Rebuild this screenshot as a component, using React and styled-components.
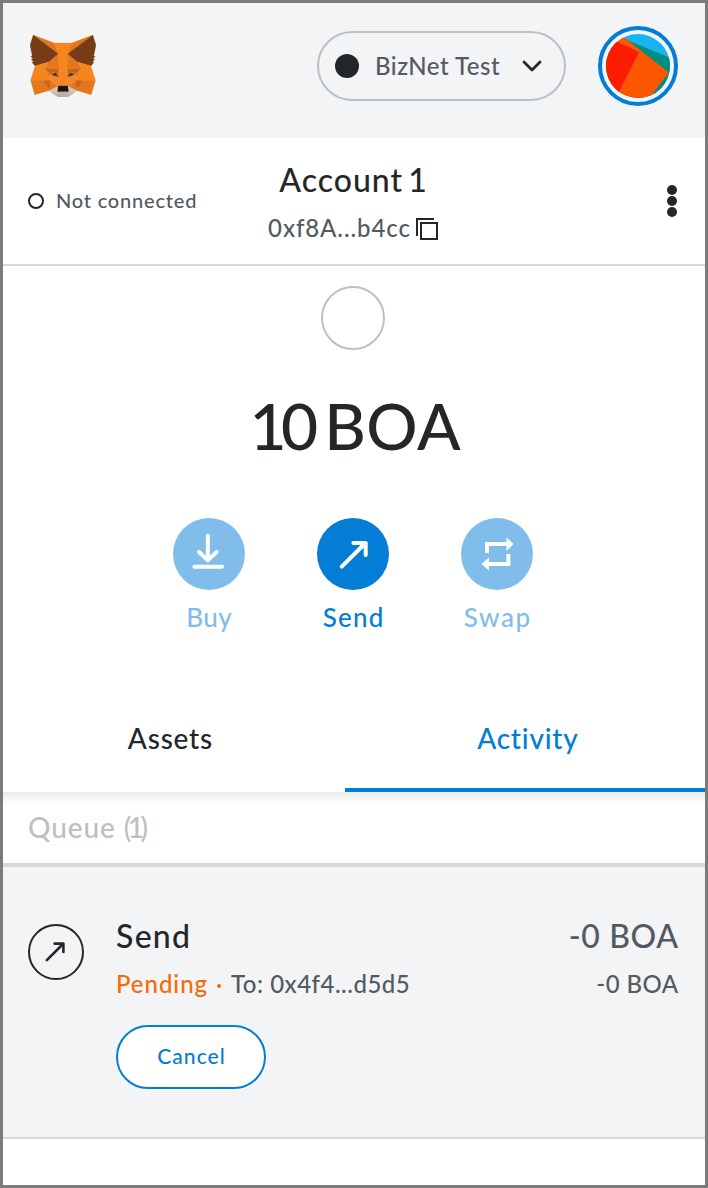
import React from "react";
import styled, { createGlobalStyle } from "styled-components";

const c = {
  frame: "#7c7b7b",
  ink: "#24272a",
  muted: "#535a61",
  faint: "#bbc0c5",
  line: "#d6d9dc",
  surface: "#f2f4f6",
  blue: "#037dd6",
  orange: "#f66a0a",
};

const GlobalStyle = createGlobalStyle`
  * { box-sizing: border-box; }
  body { margin: 0; background: #fff; }
  button { font: inherit; letter-spacing: inherit; border: 0; padding: 0; background: none; color: inherit; }
`;

const Popup = styled.main`
  display: flex;
  flex-direction: column;
  width: 708px;
  height: 1188px;
  border: 3px solid ${c.frame};
  background: #fff;
  color: ${c.ink};
  font-family: Lato, "Liberation Sans", sans-serif;
  overflow: hidden;
`;

const Label = styled.span`
  display: block;
  white-space: nowrap;
  font-size: ${(p) => p.$size}px;
  line-height: ${(p) => p.$line}px;
  letter-spacing: ${(p) => p.$track || 0}px;
  word-spacing: ${(p) => p.$word || 0}px;
  margin-right: ${(p) => -(p.$track || 0)}px;
  font-weight: 500;
  color: ${(p) => p.$color || "inherit"};
`;

const Digits = styled.span`
  letter-spacing: ${(p) => p.$track}px;
`;

const Header = styled.header`
  display: flex;
  align-items: center;
  height: 135px;
  padding: 0 27px 9px;
  background: ${c.surface};
`;

const FoxLogo = styled.svg`
  display: block;
  width: 66px;
  height: 62px;
`;

const NetworkPicker = styled.button`
  display: flex;
  align-items: center;
  width: 249px;
  height: 70px;
  margin-left: auto;
  padding: 0 22px 0 16px;
  border: 2px solid ${c.faint};
  border-radius: 35px;
`;

const NetworkDot = styled.span`
  width: 24px;
  height: 24px;
  margin-right: 16px;
  border-radius: 50%;
  background: ${c.ink};
`;

const NetworkName = styled.div`
  padding-bottom: 1px;
`;

const Chevron = styled.svg`
  display: block;
  width: 20px;
  height: 12px;
  margin-left: auto;
`;

const Avatar = styled.div`
  width: 80px;
  height: 80px;
  margin-left: 32px;
  padding: 4px;
  border: 4px solid ${c.blue};
  border-radius: 50%;
`;

const Identicon = styled.svg`
  display: block;
  width: 64px;
  height: 64px;
  border-radius: 50%;
`;

const AccountBar = styled.section`
  display: grid;
  grid-template-columns: 1fr auto 1fr;
  align-items: center;
  height: 128px;
  padding: 0 25px;
  border-bottom: 2px solid ${c.line};
`;

const Connection = styled.div`
  display: flex;
  align-items: center;
  gap: 12px;
`;

const ConnectionRing = styled.span`
  width: 16px;
  height: 16px;
  border: 2px solid ${c.ink};
  border-radius: 50%;
`;

const ConnectionText = styled.div`
  padding-bottom: 2px;
`;

const AccountInfo = styled.div`
  display: flex;
  flex-direction: column;
  align-items: center;
  gap: 12px;
  padding-top: 2px;
  padding-right: 2px;
`;

const AddressRow = styled.div`
  display: flex;
  align-items: center;
  gap: 6px;
`;

const CopyIcon = styled.svg`
  display: block;
  width: 22px;
  height: 22px;
  margin-top: 2px;
`;

const MenuDots = styled.div`
  display: flex;
  flex-direction: column;
  gap: 1px;
  justify-self: end;
  padding-right: 3px;
`;

const Dot = styled.span`
  width: 10px;
  height: 10px;
  border-radius: 50%;
  background: ${c.ink};
`;

const Overview = styled.section`
  display: flex;
  flex-direction: column;
  align-items: center;
  height: 422px;
  padding-top: 20px;
  padding-right: 2px;
`;

const TokenRing = styled.div`
  width: 64px;
  height: 64px;
  border: 2px solid ${c.faint};
  border-radius: 50%;
`;

const Balance = styled.div`
  display: flex;
  justify-content: center;
  margin: 35px 0 52px;
  padding-left: 4px;
`;

const Actions = styled.div`
  display: flex;
  gap: 72px;
`;

const Action = styled.button`
  display: flex;
  flex-direction: column;
  align-items: center;
  gap: 11px;
  width: 72px;
  color: ${c.blue};
  opacity: ${(p) => (p.disabled ? 0.5 : 1)};
`;

const ActionDisc = styled.span`
  display: block;
  width: 72px;
  height: 72px;
  border-radius: 50%;
  background: ${c.blue};

  svg { display: block; }
`;

const Tabs = styled.nav`
  display: flex;
  height: 104px;
`;

const Tab = styled.button`
  display: flex;
  justify-content: center;
  width: ${(p) => p.$width}px;
  padding: ${(p) => p.$pad};
  border-bottom: 4px solid ${(p) => (p.$active ? c.blue : "transparent")};
  color: ${(p) => (p.$active ? c.blue : c.ink)};
`;

const QueueTitle = styled.div`
  height: 75px;
  padding: 18px 25px 0;
  border-bottom: 4px solid ${c.line};
  background: linear-gradient(#ebebeb, #f8f8f8 7px, #fff 15px);
`;

const Transaction = styled.article`
  display: flex;
  height: 272px;
  padding: 49px 27px 0 25px;
  background: ${c.surface};
  border-bottom: 2px solid ${c.line};
`;

const TransactionIcon = styled.div`
  width: 56px;
  height: 56px;
  margin: 8px 32px 0 0;
  border: 2px solid ${c.ink};
  border-radius: 50%;

  svg { display: block; }
`;

const Details = styled.div`
  display: flex;
  flex: 1;
  flex-direction: column;
  align-items: flex-start;
`;

const StatusRow = styled.div`
  display: flex;
  align-items: center;
  margin-top: 13px;
`;

const StatusDot = styled.span`
  width: 4px;
  height: 4px;
  margin: 4px 10px 0;
  border-radius: 50%;
  background: ${c.orange};
`;

const CancelButton = styled.button`
  display: flex;
  align-items: center;
  justify-content: center;
  width: 150px;
  height: 64px;
  margin-top: 26px;
  padding-bottom: 2px;
  border: 2px solid ${c.blue};
  border-radius: 32px;
  background: #fff;
  color: ${c.blue};
`;

const Amounts = styled.div`
  display: flex;
  flex-direction: column;
  align-items: flex-end;
  gap: 13px;
  color: ${c.muted};
`;

const foxShapes = [
  ["#e2761b", "274.1,35.5 174.6,109.4 193,65.8"],
  ["#e4761b", "44.4,35.5 143.1,110.1 125.6,65.8"],
  ["#e4761b", "238.3,206.8 211.8,247.4 268.5,263 284.8,207.7"],
  ["#e4761b", "33.9,207.7 50.1,263 106.8,247.4 80.3,206.8"],
  ["#e4761b", "103.6,138.2 87.8,162.1 144.1,164.6 142.1,104.1"],
  ["#e4761b", "214.9,138.2 175.9,103.4 174.6,164.6 230.8,162.1"],
  ["#e4761b", "106.8,247.4 140.6,230.9 111.4,208.1"],
  ["#e4761b", "177.9,230.9 211.8,247.4 207.1,208.1"],
  ["#d7c1b3", "211.8,247.4 177.9,230.9 180.6,253 180.3,262.3"],
  ["#d7c1b3", "106.8,247.4 138.3,262.3 138.1,253 140.6,230.9"],
  ["#cd6116", "106.8,247.4 111.6,206.8 80.3,207.7"],
  ["#cd6116", "207,206.8 211.8,247.4 238.3,207.7"],
  ["#cd6116", "230.8,162.1 174.6,164.6 179.8,193.5 188.1,176.1 208.1,185.2"],
  ["#cd6116", "110.6,185.2 130.6,176.1 138.8,193.5 144.1,164.6 87.8,162.1"],
  ["#e4751f", "87.8,162.1 111.4,208.1 110.6,185.2"],
  ["#e4751f", "208.1,185.2 207.1,208.1 230.8,162.1"],
  ["#e4751f", "144.1,164.6 138.8,193.5 145.4,227.6 146.9,182.7"],
  ["#e4751f", "174.6,164.6 171.9,182.6 173.1,227.6 179.8,193.5"],
  ["#f6851b", "179.8,193.5 173.1,227.6 177.9,230.9 207.1,208.1 208.1,185.2"],
  ["#f6851b", "110.6,185.2 111.4,208.1 140.6,230.9 145.4,227.6 138.8,193.5"],
  ["#cd6116", "110.6,185.2 130.6,176.1 138.8,193.5"],
  ["#cd6116", "179.7,193.5 188,176.1 208.1,185.2"],
  ["#233447", "138.8,193.5 117,187 131,180"],
  ["#233447", "179.7,193.5 187.5,180 201.5,187"],
  ["#c0ad9e", "180.3,262.3 180.6,253 178.1,250.8 140.4,250.8 138.1,253 138.3,262.3 106.8,247.4 117.8,256.4 140.1,271.9 178.4,271.9 200.8,256.4 211.8,247.4"],
  ["#161616", "177.9,230.9 173.1,227.6 145.4,227.6 140.6,230.9 138.1,253 140.4,250.8 178.1,250.8 180.6,253"],
  ["#763d16", "278.3,114.2 286.8,73.4 274.1,35.5 177.9,106.9 214.9,138.2 267.2,153.5 278.8,140 273.8,136.4 281.8,129.1 275.6,124.3 283.6,118.2"],
  ["#763d16", "31.8,73.4 40.3,114.2 34.9,118.2 42.9,124.3 36.8,129.1 44.8,136.4 39.8,140 51.3,153.5 103.6,138.2 140.6,106.9 44.4,35.5"],
  ["#f6851b", "267.2,153.5 214.9,138.2 230.8,162.1 207.1,208.1 238.3,207.7 284.8,207.7"],
  ["#f6851b", "103.6,138.2 51.3,153.5 33.9,207.7 80.3,207.7 111.4,208.1 87.8,162.1"],
  ["#f6851b", "174.6,164.6 177.9,106.9 193.1,65.8 125.6,65.8 140.6,106.9 144.1,164.6 145.3,182.8 145.4,227.6 173.1,227.6 173.3,182.8"],
];

const BuyGlyph = () => (
  <svg width="72" height="72" fill="none" stroke="#fff" strokeWidth="4" strokeLinecap="round" strokeLinejoin="round">
    <path d="M34.8 17.8V41M26 34l8.8 8.4L43.6 34M21.4 48.8h27.6" />
  </svg>
);

const SendGlyph = () => (
  <svg width="72" height="72" fill="none" stroke="#fff" strokeWidth="4" strokeLinecap="round" strokeLinejoin="round">
    <path d="M24.7 48.7L48 25.5M36.4 25H48.7V37" />
  </svg>
);

const SwapGlyph = () => (
  <svg width="72" height="72" fill="#fff">
    <path d="M24 35V24h21.5v-4.6l7 6.6-7 7v-5H28v7zM49.4 36v12H28v4.6L20.4 46l7.6-6.6V44h17.4v-8z" />
  </svg>
);

export default function App() {
  return (
    <>
      <GlobalStyle />
      <Popup>
        <Header>
          <FoxLogo viewBox="31.8 35.5 255 236.4" preserveAspectRatio="none" aria-hidden="true">
            {foxShapes.map(([fill, points]) => (
              <polygon key={fill + points} points={points} fill={fill} stroke={fill} strokeWidth="0.8" />
            ))}
          </FoxLogo>
          <NetworkPicker>
            <NetworkDot />
            <NetworkName>
              <Label $size={24} $line={30} $track={0.5} $color={c.muted}>BizNet Test</Label>
            </NetworkName>
            <Chevron viewBox="0 0 20 12" fill="none" stroke={c.ink} strokeWidth="2.8" strokeLinecap="round" strokeLinejoin="round">
              <path d="M2 2l8 8 8-8" />
            </Chevron>
          </NetworkPicker>
          <Avatar>
            <Identicon viewBox="0 0 64 64" aria-hidden="true">
              <rect width="64" height="64" fill="#18b4f2" />
              <path d="M14 3L64 23.7V64H30z" fill="#018e7f" />
              <path d="M0 -5L14 0.3L63 38.6L42 66H0z" fill="#fc5600" />
              <path d="M-2 1.3L33 18.3L9 66H-2z" fill="#fb1c02" />
            </Identicon>
          </Avatar>
        </Header>

        <AccountBar>
          <Connection>
            <ConnectionRing />
            <ConnectionText>
              <Label $size={20} $line={28} $track={0.8} $color={c.muted}>Not connected</Label>
            </ConnectionText>
          </Connection>
          <AccountInfo>
            <Label $size={32} $line={40} $track={1} $word={-4}>Account 1</Label>
            <AddressRow>
              <Label $size={24} $line={32} $track={0.9} $color={c.muted}>0xf8A...b4cc</Label>
              <CopyIcon viewBox="0 0 22 22" fill="none" stroke={c.ink} strokeWidth="2">
                <path d="M1 18V1h17M5 5h16v16H5z" />
              </CopyIcon>
            </AddressRow>
          </AccountInfo>
          <MenuDots>
            <Dot />
            <Dot />
            <Dot />
          </MenuDots>
        </AccountBar>

        <Overview>
          <TokenRing />
          <Balance>
            <Label $size={64} $line={81} $track={0.5} $word={-5}><Digits $track={-5.5}>10</Digits> BOA</Label>
          </Balance>
          <Actions>
            <Action disabled>
              <ActionDisc><BuyGlyph /></ActionDisc>
              <Label $size={26} $line={32} $track={0.5}>Buy</Label>
            </Action>
            <Action>
              <ActionDisc><SendGlyph /></ActionDisc>
              <Label $size={26} $line={32} $track={1.2}>Send</Label>
            </Action>
            <Action disabled>
              <ActionDisc><SwapGlyph /></ActionDisc>
              <Label $size={26} $line={32} $track={1.6}>Swap</Label>
            </Action>
          </Actions>
        </Overview>

        <Tabs>
          <Tab $width={342} $pad="32px 8px 0 0">
            <Label $size={28} $line={36} $track={0.8}>Assets</Label>
          </Tab>
          <Tab $active $width={360} $pad="32px 0 0 5px">
            <Label $size={28} $line={36} $track={0.8}>Activity</Label>
          </Tab>
        </Tabs>

        <QueueTitle>
          <Label $size={28} $line={34} $track={0.9} $color={c.faint}>Queue <Digits $track={-3.5}>(1)</Digits></Label>
        </QueueTitle>

        <Transaction>
          <TransactionIcon>
            <svg width="52" height="52" fill="none" stroke={c.ink} strokeWidth="2.6" strokeLinecap="round" strokeLinejoin="round">
              <path d="M16.8 34.2L33 18M24.6 17.6h8.8V26" />
            </svg>
          </TransactionIcon>
          <Details>
            <Label $size={32} $line={40} $track={1.3}>Send</Label>
            <StatusRow>
              <Label $size={24} $line={30} $track={0.95} $color={c.orange}>Pending</Label>
              <StatusDot />
              <Label $size={24} $line={30} $track={0.5} $color={c.muted}>To: 0x4f4...d5d5</Label>
            </StatusRow>
            <CancelButton>
              <Label $size={21} $line={26} $track={1.1}>Cancel</Label>
            </CancelButton>
          </Details>
          <Amounts>
            <Label $size={32} $line={40} $track={0.6}>-0 BOA</Label>
            <Label $size={24} $line={30} $track={0.4}>-0 BOA</Label>
          </Amounts>
        </Transaction>
      </Popup>
    </>
  );
}
